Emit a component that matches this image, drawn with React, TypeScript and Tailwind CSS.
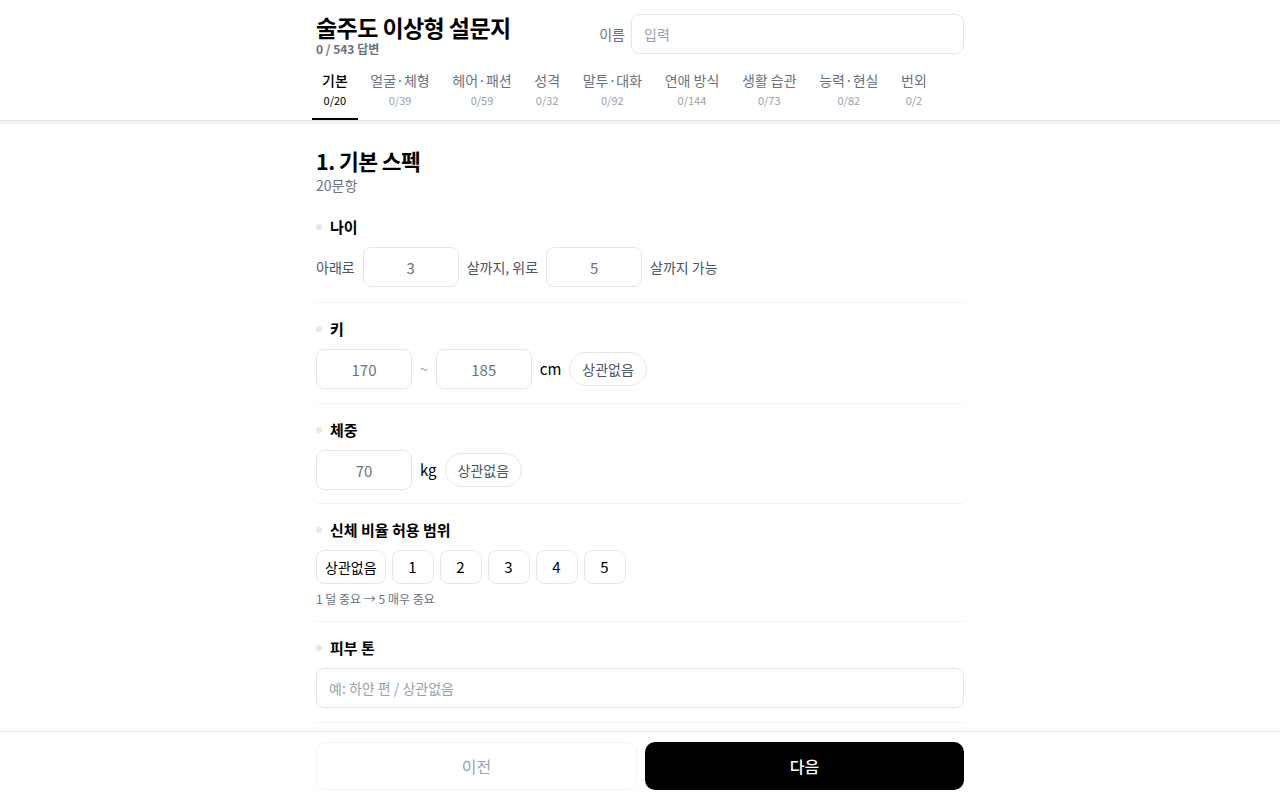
import { useState } from 'react'

// ---------------------------------------------------------------------------
// Data
// ---------------------------------------------------------------------------

const TABS = [
  { label: '기본', count: '0/20' },
  { label: '얼굴·체형', count: '0/39' },
  { label: '헤어·패션', count: '0/59' },
  { label: '성격', count: '0/32' },
  { label: '말투·대화', count: '0/92' },
  { label: '연애 방식', count: '0/144' },
  { label: '생활 습관', count: '0/73' },
  { label: '능력·현실', count: '0/82' },
  { label: '번외', count: '0/2' },
]

const FONT = "font-['Noto_Sans_CJK_KR','Noto_Sans',sans-serif]"

// ---------------------------------------------------------------------------
// Small pieces
// ---------------------------------------------------------------------------

function NumBox({ placeholder }: { placeholder: string }) {
  return (
    <input
      className="w-24 h-10 rounded-lg border border-gray-200 text-center text-[15px] text-gray-800 placeholder:text-gray-500 outline-none"
      placeholder={placeholder}
    />
  )
}

function QuestionTitle({ title }: { title: string }) {
  return (
    <div className="flex items-center gap-2 h-5 mb-2.5">
      <span className="w-1.5 h-1.5 rounded-full bg-gray-200" />
      <span className="text-[15px] font-bold text-black leading-5">{title}</span>
    </div>
  )
}

function Question({ title, children, pb = 'pb-[14px]' }: { title: string; children: React.ReactNode; pb?: string }) {
  return (
    <section className={`pt-4 ${pb} border-b border-gray-100`}>
      <QuestionTitle title={title} />
      {children}
    </section>
  )
}

function Pill() {
  return (
    <button className="h-[34px] px-3 rounded-full border border-gray-200 text-sm text-gray-600">
      상관없음
    </button>
  )
}

// ---------------------------------------------------------------------------
// Page
// ---------------------------------------------------------------------------

export default function App() {
  const [tab, setTab] = useState(0)

  return (
    <div className={`min-h-screen bg-white ${FONT}`}>
      {/* Header */}
      <header className="border-b border-gray-200 shadow-[0_3px_0_0_#f3f3f3] bg-white">
        <div className="max-w-[648px] mx-auto">
          <div className="flex items-start justify-between pt-[14px]">
            <div>
              <h1 className="text-[23px] font-bold tracking-tight text-black leading-[26px]">술주도 이상형 설문지</h1>
              <p className="text-xs font-bold text-gray-500 leading-4 mt-px">0 / 543 답변</p>
            </div>
            <div className="flex items-center gap-1.5">
              <span className="text-sm text-gray-500">이름</span>
              <input
                className="w-[333px] h-10 px-3 rounded-lg border border-gray-200 text-sm outline-none placeholder:text-gray-400"
                placeholder="입력"
              />
            </div>
          </div>

          {/* Tabs */}
          <nav className="flex gap-[2.6px] -ml-1 mt-[12px]">
            {TABS.map((t, i) => (
              <button
                key={t.label}
                onClick={() => setTab(i)}
                className={`flex flex-col items-center px-2.5 pt-[1px] pb-2.5 border-b-2 ${
                  i === tab ? 'border-black' : 'border-transparent'
                }`}
              >
                <span className={`text-sm leading-5 ${i === tab ? 'text-black font-medium' : 'text-gray-500'}`}>
                  {t.label}
                </span>
                <span className={`text-[11px] leading-4 mt-0.5 ${i === tab ? 'text-black' : 'text-gray-400'}`}>
                  {t.count}
                </span>
              </button>
            ))}
          </nav>
        </div>
      </header>

      {/* Body */}
      <main className="max-w-[648px] mx-auto pt-[26px] pb-28">
        <h2 className="text-[21.5px] font-bold text-black leading-7 tracking-tight">1. 기본 스펙</h2>
        <p className="text-sm text-gray-500 leading-5 mb-1.5">20문항</p>

        <Question title="나이" pb="pb-[15px]">
          <div className="flex items-center gap-2 text-sm text-gray-600">
            <span>아래로</span>
            <NumBox placeholder="3" />
            <span>살까지, 위로</span>
            <NumBox placeholder="5" />
            <span>살까지 가능</span>
          </div>
        </Question>

        <Question title="키">
          <div className="flex items-center gap-2 text-[15px]">
            <NumBox placeholder="170" />
            <span className="text-gray-400 text-sm">~</span>
            <NumBox placeholder="185" />
            <span className="text-black">cm</span>
            <Pill />
          </div>
        </Question>

        <Question title="체중" pb="pb-[13px]">
          <div className="flex items-center gap-2 text-[15px]">
            <NumBox placeholder="70" />
            <span className="text-black">kg</span>
            <Pill />
          </div>
        </Question>

        <section className="pt-4 pb-[14px] border-b border-gray-100">
          <QuestionTitle title="신체 비율 허용 범위" />
          <div className="flex gap-1.5">
            <button className="h-[34px] px-2 rounded-lg border border-gray-200 text-sm text-black">상관없음</button>
            {[1, 2, 3, 4, 5].map((n) => (
              <button key={n} className="w-[42px] h-[34px] rounded-lg border border-gray-200 text-[15px] text-black">
                {n}
              </button>
            ))}
          </div>
          <p className="text-xs text-gray-500 mt-[7px] leading-4">1 덜 중요 → 5 매우 중요</p>
        </section>

        <Question title="피부 톤">
          <input
            className="w-full h-10 px-3 rounded-lg border border-gray-200 text-sm outline-none placeholder:text-gray-400"
            placeholder="예: 하얀 편 / 상관없음"
          />
        </Question>
      </main>

      {/* Footer */}
      <footer className="fixed bottom-0 inset-x-0 bg-white border-t border-gray-200">
        <div className="max-w-[648px] mx-auto flex gap-2 py-2.5">
          <button className="flex-1 h-12 rounded-[10px] border border-gray-100 text-base text-gray-400">이전</button>
          <button className="flex-1 h-12 rounded-[10px] bg-black text-base font-medium text-white">다음</button>
        </div>
      </footer>
    </div>
  )
}
